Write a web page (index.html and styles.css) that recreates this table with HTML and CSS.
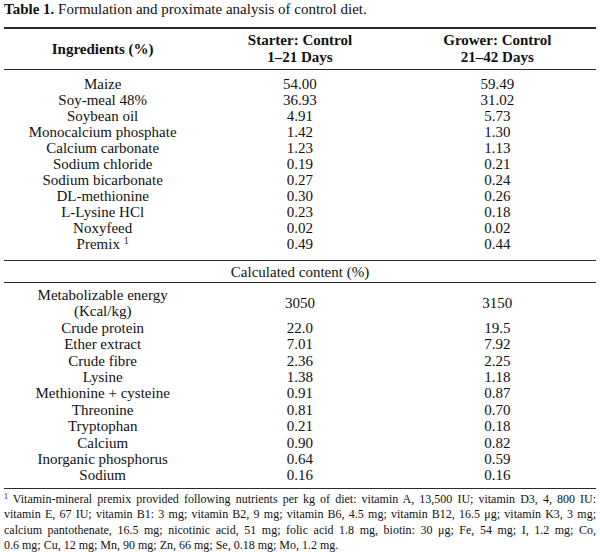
FILE: index.html
```html
<!DOCTYPE html>
<html lang="en">
<head>
<meta charset="utf-8">
<title>Table 1</title>
<link rel="stylesheet" href="styles.css">
</head>
<body>
<div class="page">
  <p class="caption"><b>Table 1.</b> Formulation and proximate analysis of control diet.</p>
  <table class="diet">
    <colgroup><col class="c1"><col class="c2"><col class="c3"></colgroup>
    <thead>
      <tr>
        <th>Ingredients (%)</th>
        <th>Starter: Control<br>1–21 Days</th>
        <th>Grower: Control<br>21–42 Days</th>
      </tr>
    </thead>
    <tbody class="ingredients">
      <tr><td>Maize</td><td>54.00</td><td>59.49</td></tr>
      <tr><td>Soy-meal 48%</td><td>36.93</td><td>31.02</td></tr>
      <tr><td>Soybean oil</td><td>4.91</td><td>5.73</td></tr>
      <tr><td>Monocalcium phosphate</td><td>1.42</td><td>1.30</td></tr>
      <tr><td>Calcium carbonate</td><td>1.23</td><td>1.13</td></tr>
      <tr><td>Sodium chloride</td><td>0.19</td><td>0.21</td></tr>
      <tr><td>Sodium bicarbonate</td><td>0.27</td><td>0.24</td></tr>
      <tr><td>DL-methionine</td><td>0.30</td><td>0.26</td></tr>
      <tr><td>L-Lysine HCl</td><td>0.23</td><td>0.18</td></tr>
      <tr><td>Noxyfeed</td><td>0.02</td><td>0.02</td></tr>
      <tr><td>Premix <sup>1</sup></td><td>0.49</td><td>0.44</td></tr>
    </tbody>
    <tbody class="section">
      <tr><td colspan="3">Calculated content (%)</td></tr>
    </tbody>
    <tbody class="calc">
      <tr><td>Metabolizable energy<br>(Kcal/kg)</td><td>3050</td><td>3150</td></tr>
      <tr><td>Crude protein</td><td>22.0</td><td>19.5</td></tr>
      <tr><td>Ether extract</td><td>7.01</td><td>7.92</td></tr>
      <tr><td>Crude fibre</td><td>2.36</td><td>2.25</td></tr>
      <tr><td>Lysine</td><td>1.38</td><td>1.18</td></tr>
      <tr><td>Methionine + cysteine</td><td>0.91</td><td>0.87</td></tr>
      <tr><td>Threonine</td><td>0.81</td><td>0.70</td></tr>
      <tr><td>Tryptophan</td><td>0.21</td><td>0.18</td></tr>
      <tr><td>Calcium</td><td>0.90</td><td>0.82</td></tr>
      <tr><td>Inorganic phosphorus</td><td>0.64</td><td>0.59</td></tr>
      <tr><td>Sodium</td><td>0.16</td><td>0.16</td></tr>
    </tbody>
  </table>
  <div class="footnote">
    <span class="line"><sup>1</sup> Vitamin-mineral premix provided following nutrients per kg of diet: vitamin A, 13,500 IU; vitamin D3, 4, 800 IU:</span>
    <span class="line">vitamin E, 67 IU; vitamin B1: 3 mg; vitamin B2, 9 mg; vitamin B6, 4.5 mg; vitamin B12, 16.5 μg; vitamin K3, 3 mg;</span>
    <span class="line">calcium pantothenate, 16.5 mg; nicotinic acid, 51 mg; folic acid 1.8 mg, biotin: 30 μg; Fe, 54 mg; I, 1.2 mg; Co,</span>
    <span class="line last">0.6 mg; Cu, 12 mg; Mn, 90 mg; Zn, 66 mg; Se, 0.18 mg; Mo, 1.2 mg.</span>
  </div>
</div>
</body>
</html>
```

FILE: styles.css
```css
html, body {
  margin: 0;
  padding: 0;
  background: #ffffff;
}

body {
  font-family: "Liberation Serif", "Times New Roman", serif;
  color: #111111;
  font-size: 15px;
}

.page {
  width: 592px;
  padding: 1px 4px 0 4px;
}

.caption {
  margin: 0 0 10px 0;
  line-height: 16px;
  font-size: 15px;
}

.caption b {
  font-weight: 700;
}

.diet {
  width: 100%;
  border-collapse: collapse;
  table-layout: fixed;
  border-bottom: 1px solid #2a2a2a;
}

.diet col {
  width: 33.333%;
}

.diet th,
.diet td {
  text-align: center;
  padding: 0;
  font-weight: 400;
  vertical-align: middle;
}

.diet thead th {
  font-weight: 700;
  line-height: 17px;
  padding: 3px 0;
  border-top: 2px solid #2a2a2a;
  border-bottom: 1px solid #2a2a2a;
}

.ingredients td {
  line-height: 16px;
}

.ingredients tr:first-child td {
  padding-top: 6px;
}

.ingredients tr:last-child td {
  padding-bottom: 8px;
}

.section td {
  line-height: 16px;
  padding: 3px 0 2px 0;
  border-top: 1px solid #2a2a2a;
  border-bottom: 1px solid #2a2a2a;
}

.calc td {
  line-height: 16.4px;
}

.calc tr:first-child td {
  padding-top: 4px;
}

.calc tr:last-child td {
  padding-bottom: 4px;
}

sup {
  font-size: 10px;
  line-height: 0;
  vertical-align: 5px;
}

.footnote {
  margin-top: 3px;
  font-size: 12px;
  line-height: 15.5px;
}

.footnote .line {
  display: block;
  white-space: nowrap;
  text-align: justify;
  text-align-last: justify;
}

.footnote .line.last {
  text-align-last: left;
}

.footnote sup {
  font-size: 8px;
  vertical-align: 4px;
}
```
